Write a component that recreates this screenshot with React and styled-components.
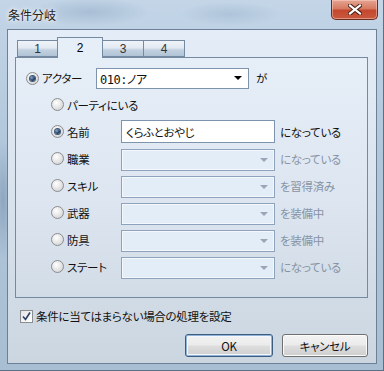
import React from "react"
import styled, { createGlobalStyle } from "styled-components"

const Global = createGlobalStyle`
  html, body {
    margin: 0;
    padding: 0;
    overflow: hidden;
    background: #a9bfd4;
  }
  * { box-sizing: border-box; }
`

const uiFont = `"Noto Sans CJK JP", "Liberation Sans", sans-serif`

// Aero window frame
const Window = styled.div`
  width: 384px;
  height: 371px;
  display: flex;
  flex-direction: column;
  padding: 0 6px 6px 7px;
  font-family: ${uiFont};
  font-size: 11.5px;
  font-feature-settings: "palt";
  letter-spacing: -0.3px;
  color: #111;
  background:
    radial-gradient(ellipse 60px 14px at 90px 12px, rgba(120, 150, 180, 0.35), transparent),
    radial-gradient(ellipse 50px 12px at 230px 14px, rgba(130, 160, 190, 0.3), transparent),
    radial-gradient(ellipse 10px 60px at 3px 200px, rgba(90, 120, 150, 0.4), transparent),
    linear-gradient(180deg, #c3d5e7 0%, #b2c7dc 40%, #a8bed3 100%);
  border-right: 1px solid #5b6f85;
  border-bottom: 1px solid #5b6f85;
`

const TitleBar = styled.div`
  height: 29px;
  flex: none;
  display: flex;
  justify-content: space-between;
  align-items: flex-start;
`

const Title = styled.div`
  margin: 6px 0 0 1px;
  font-size: 12px;
  letter-spacing: 0;
  color: #1f1f1f;
  text-shadow: 0 0 6px rgba(255, 255, 255, 0.9), 0 0 3px rgba(255, 255, 255, 0.9);
`

const CloseButton = styled.div`
  width: 47px;
  height: 20px;
  margin-right: -1px;
  display: flex;
  align-items: center;
  justify-content: center;
  border: 1px solid #6a2d20;
  border-top: none;
  border-radius: 0 0 5px 5px;
  background: linear-gradient(180deg, #e6a594 0%, #d67a62 45%, #c4482e 55%, #c85a3e 100%);
  box-shadow: inset 0 0 0 1px rgba(255, 220, 210, 0.45);
`

const Client = styled.div`
  flex: 1;
  display: flex;
  flex-direction: column;
  border: 1px solid #6e8095;
  background: linear-gradient(180deg, #e4edf7 0%, #d9e3ed 50%, #ccd6e0 100%);
`

const TabBar = styled.div`
  display: flex;
  align-items: flex-end;
  height: 27px;
  padding-left: 9px;
`

const Tab = styled.div`
  width: ${p => p.w}px;
  height: ${p => (p.active ? 21 : 17)}px;
  margin-bottom: ${p => (p.active ? -1 : 0)}px;
  margin-left: -1px;
  position: relative;
  z-index: ${p => (p.active ? 2 : 1)};
  display: flex;
  align-items: center;
  justify-content: center;
  padding-top: ${p => (p.active ? 0 : 1)}px;
  border: 1px solid #7589a0;
  border-bottom: ${p => (p.active ? "none" : "1px solid #7589a0")};
  color: ${p => (p.active ? "#000" : "#333")};
  font-family: "Liberation Sans", sans-serif;
  font-size: 12px;
  background: ${p =>
    p.active
      ? "#e6eef8"
      : "linear-gradient(180deg, #eef3f8 0%, #e3eaf2 45%, #c2d1e0 60%, #b0c3d6 100%)"};
  &:first-child { margin-left: 0; }
`

const Panel = styled.div`
  margin: 0 8px 0 7px;
  height: 241px;
  border: 1px solid #7589a0;
  background: linear-gradient(180deg, #e6eef8 0%, #dde6f0 60%, #d2dce6 100%);
  padding: 7px 0 0 10px;
  display: flex;
  flex-direction: column;
`

const Row = styled.div`
  height: ${p => p.h || 27}px;
  display: flex;
  align-items: center;
  padding-left: ${p => (p.sub ? 25 : 0)}px;
`

const RadioCircle = styled.span`
  width: 13px;
  height: 13px;
  flex: none;
  border-radius: 50%;
  border: 1px solid #8b8d90;
  background: radial-gradient(circle at 40% 35%, #ffffff 0%, #e8e8e8 45%, #c8cacd 100%);
  display: flex;
  align-items: center;
  justify-content: center;
  &::after {
    content: "";
    width: 5px;
    height: 5px;
    border-radius: 50%;
    display: ${p => (p.checked ? "block" : "none")};
    background: radial-gradient(circle at 35% 35%, #8aa6c8 0%, #2a4a72 50%, #0f2240 100%);
    box-shadow: 0 0 0 1px #3d5677;
  }
`

const Label = styled.span`
  width: 54px;
  flex: none;
  margin-left: 3px;
  white-space: nowrap;
  color: ${p => (p.dim ? "#8793a5" : "#111")};
`

const Field = styled.div`
  width: ${p => p.w}px;
  height: ${p => p.h}px;
  flex: none;
  display: flex;
  align-items: center;
  justify-content: space-between;
  padding: 0 4px 0 ${p => p.pl || 3}px;
  border: 1px solid ${p => (p.disabled ? "#8ea3bb" : "#7e94ac")};
  background: ${p => (p.disabled ? "#e3edf8" : "#ffffff")};
  box-shadow: ${p => (p.disabled ? "inset 0 0 0 1px #f4f8fc" : "none")};
  white-space: nowrap;
  margin-top: ${p => p.mt || 0}px;
`

const Mono = styled.span`
  font-family: "DejaVu Sans Mono", "Noto Sans CJK JP", monospace;
  font-size: 12px;
  letter-spacing: -0.5px;
`

const Arrow = styled.span`
  width: 0;
  height: 0;
  border-left: 4px solid transparent;
  border-right: 4px solid transparent;
  border-top: 4px solid ${p => (p.disabled ? "#9aa6b6" : "#000")};
  margin-right: 2px;
`

const Suffix = styled.span`
  margin-left: ${p => p.ml || 5}px;
  white-space: nowrap;
  color: ${p => (p.dim ? "#8793a5" : "#111")};
`

const CheckRow = styled.div`
  display: flex;
  align-items: center;
  margin: 10px 0 0 12px;
  gap: 3px;
`

const CheckBox = styled.span`
  width: 13px;
  height: 13px;
  border: 1px solid #8b8d90;
  background: linear-gradient(135deg, #e2e4e7 0%, #f6f6f6 60%, #ffffff 100%);
  display: flex;
  align-items: center;
  justify-content: center;
`

const ButtonRow = styled.div`
  display: flex;
  justify-content: flex-end;
  gap: 9px;
  margin: auto 8px 6px 0;
`

const Button = styled.div`
  width: ${p => p.w}px;
  height: 23px;
  display: flex;
  align-items: center;
  justify-content: center;
  border: 1px solid ${p => (p.primary ? "#3c5c80" : "#707070")};
  border-radius: 3px;
  background: linear-gradient(180deg, #f3f3f3 0%, #ebebeb 48%, #dddddd 52%, #cfcfcf 100%);
  box-shadow: ${p =>
    p.primary ? "inset 0 0 0 1px #8fb3d8, inset 0 0 0 2px #f4f8fc" : "inset 0 0 0 1px #fbfbfb"};
  color: #111;
`

const tabs = [
  { n: "1", w: 41 },
  { n: "2", w: 46, active: true },
  { n: "3", w: 42 },
  { n: "4", w: 42 },
]

const subRows = [
  { label: "職業", suffix: "になっている" },
  { label: "スキル", suffix: "を習得済み" },
  { label: "武器", suffix: "を装備中" },
  { label: "防具", suffix: "を装備中" },
  { label: "ステート", suffix: "になっている" },
]

const App = () => {
  return (
    <>
      <Global />
      <Window>
        <TitleBar>
          <Title>条件分岐</Title>
          <CloseButton>
            <svg width="14" height="11" viewBox="0 0 14 11">
              <path d="M2 1.5 L12 9.5 M12 1.5 L2 9.5" stroke="#4a2418" strokeWidth="4.2" strokeLinecap="square" />
              <path d="M2 1.5 L12 9.5 M12 1.5 L2 9.5" stroke="#ffffff" strokeWidth="2.2" strokeLinecap="square" />
            </svg>
          </CloseButton>
        </TitleBar>
        <Client>
          <TabBar>
            {tabs.map(t => (
              <Tab key={t.n} w={t.w} active={t.active}>{t.n}</Tab>
            ))}
          </TabBar>
          <Panel>
            <Row h={26}>
              <RadioCircle checked />
              <Label>アクター</Label>
              <Field w={153} h={21} pl={3}>
                <Mono>010:ノア</Mono>
                <Arrow />
              </Field>
              <Suffix ml={7}>が</Suffix>
            </Row>
            <Row sub>
              <RadioCircle />
              <Label>パーティにいる</Label>
            </Row>
            <Row sub>
              <RadioCircle checked />
              <Label>名前</Label>
              <Field w={154} h={23} pl={4}>くらふとおやじ</Field>
              <Suffix>になっている</Suffix>
            </Row>
            {subRows.map(r => (
              <Row sub key={r.label}>
                <RadioCircle />
                <Label>{r.label}</Label>
                <Field w={154} h={22} mt={2} disabled>
                  <span />
                  <Arrow disabled />
                </Field>
                <Suffix dim>{r.suffix}</Suffix>
              </Row>
            ))}
          </Panel>
          <CheckRow>
            <CheckBox>
              <svg width="9" height="9" viewBox="0 0 9 9">
                <path d="M1 4.5 L3.5 7.5 L8 0.5" fill="none" stroke="#2b3f66" strokeWidth="1.6" />
              </svg>
            </CheckBox>
            <span>条件に当てはまらない場合の処理を設定</span>
          </CheckRow>
          <ButtonRow>
            <Button primary w={88}>OK</Button>
            <Button w={86}>キャンセル</Button>
          </ButtonRow>
        </Client>
      </Window>
    </>
  )
}

export default App
